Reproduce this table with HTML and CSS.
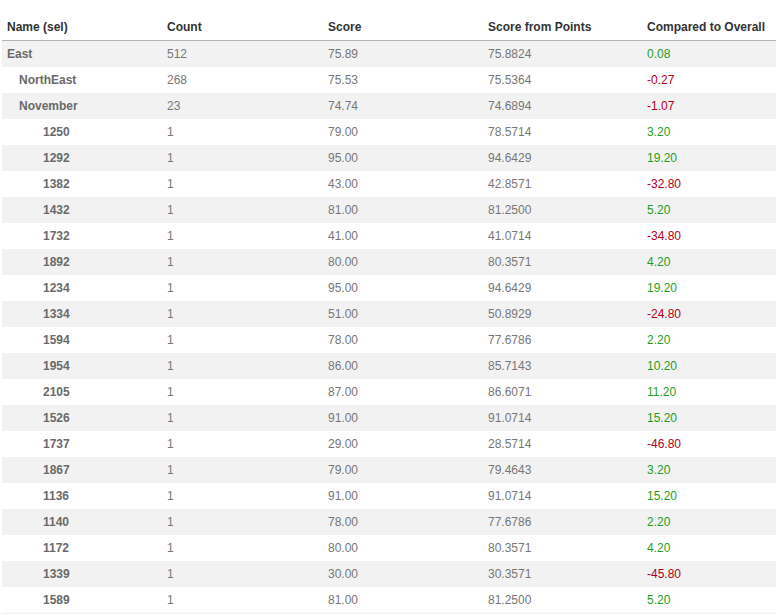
FILE: index.html
```html
<!DOCTYPE html>
<html>
<head>
<meta charset="utf-8">
<link rel="stylesheet" href="styles.css">
</head>
<body>
<table class="grid">
  <colgroup>
    <col class="c1"><col class="c2"><col class="c3"><col class="c4"><col class="c5">
  </colgroup>
  <thead>
    <tr><th>Name (sel)</th><th>Count</th><th>Score</th><th>Score from Points</th><th>Compared to Overall</th></tr>
  </thead>
  <tbody>
    <tr class="alt"><td class="name l0">East</td><td>512</td><td>75.89</td><td>75.8824</td><td class="pos">0.08</td></tr>
    <tr><td class="name l1">NorthEast</td><td>268</td><td>75.53</td><td>75.5364</td><td class="neg">-0.27</td></tr>
    <tr class="alt"><td class="name l1">November</td><td>23</td><td>74.74</td><td>74.6894</td><td class="neg">-1.07</td></tr>
    <tr><td class="name l2">1250</td><td>1</td><td>79.00</td><td>78.5714</td><td class="pos">3.20</td></tr>
    <tr class="alt"><td class="name l2">1292</td><td>1</td><td>95.00</td><td>94.6429</td><td class="pos">19.20</td></tr>
    <tr><td class="name l2">1382</td><td>1</td><td>43.00</td><td>42.8571</td><td class="neg">-32.80</td></tr>
    <tr class="alt"><td class="name l2">1432</td><td>1</td><td>81.00</td><td>81.2500</td><td class="pos">5.20</td></tr>
    <tr><td class="name l2">1732</td><td>1</td><td>41.00</td><td>41.0714</td><td class="neg">-34.80</td></tr>
    <tr class="alt"><td class="name l2">1892</td><td>1</td><td>80.00</td><td>80.3571</td><td class="pos">4.20</td></tr>
    <tr><td class="name l2">1234</td><td>1</td><td>95.00</td><td>94.6429</td><td class="pos">19.20</td></tr>
    <tr class="alt"><td class="name l2">1334</td><td>1</td><td>51.00</td><td>50.8929</td><td class="neg">-24.80</td></tr>
    <tr><td class="name l2">1594</td><td>1</td><td>78.00</td><td>77.6786</td><td class="pos">2.20</td></tr>
    <tr class="alt"><td class="name l2">1954</td><td>1</td><td>86.00</td><td>85.7143</td><td class="pos">10.20</td></tr>
    <tr><td class="name l2">2105</td><td>1</td><td>87.00</td><td>86.6071</td><td class="pos">11.20</td></tr>
    <tr class="alt"><td class="name l2">1526</td><td>1</td><td>91.00</td><td>91.0714</td><td class="pos">15.20</td></tr>
    <tr><td class="name l2">1737</td><td>1</td><td>29.00</td><td>28.5714</td><td class="neg">-46.80</td></tr>
    <tr class="alt"><td class="name l2">1867</td><td>1</td><td>79.00</td><td>79.4643</td><td class="pos">3.20</td></tr>
    <tr><td class="name l2">1136</td><td>1</td><td>91.00</td><td>91.0714</td><td class="pos">15.20</td></tr>
    <tr class="alt"><td class="name l2">1140</td><td>1</td><td>78.00</td><td>77.6786</td><td class="pos">2.20</td></tr>
    <tr><td class="name l2">1172</td><td>1</td><td>80.00</td><td>80.3571</td><td class="pos">4.20</td></tr>
    <tr class="alt"><td class="name l2">1339</td><td>1</td><td>30.00</td><td>30.3571</td><td class="neg">-45.80</td></tr>
    <tr><td class="name l2">1589</td><td>1</td><td>81.00</td><td>81.2500</td><td class="pos">5.20</td></tr>
  </tbody>
</table>
</body>
</html>
```
FILE: styles.css
```css
html, body {
  margin: 0;
  padding: 0;
  background: #fff;
}
body {
  font-family: "Liberation Sans", Arial, sans-serif;
  font-size: 12px;
  color: #777;
  overflow: hidden;
}
.grid {
  margin: 14px 0 0 2px;
  width: 774px;
  border-collapse: collapse;
  table-layout: fixed;
}
.c1 { width: 160px; }
.c2 { width: 161px; }
.c3 { width: 160px; }
.c4 { width: 159px; }
.c5 { width: 134px; }
.grid th {
  height: 26px;
  padding: 0 5px;
  text-align: left;
  font-weight: bold;
  color: #333;
  border-bottom: 1px solid #b4b4b4;
  white-space: nowrap;
  vertical-align: middle;
}
.grid td {
  height: 26px;
  padding: 0 5px;
  text-align: left;
  vertical-align: middle;
  white-space: nowrap;
  border-bottom: 0;
}
.grid tbody tr { background: #fff; }
.grid tbody tr.alt { background: #f2f2f2; }
.grid tbody tr:last-child td { border-bottom: 1px solid #eee; }
.name { font-weight: bold; color: #6a6a6a; }
.l0 { padding-left: 5px; }
.grid td.l1 { padding-left: 17px; }
.grid td.l2 { padding-left: 41px; }
.pos { color: #1f9e1f; }
.neg { color: #b50016; }
```
